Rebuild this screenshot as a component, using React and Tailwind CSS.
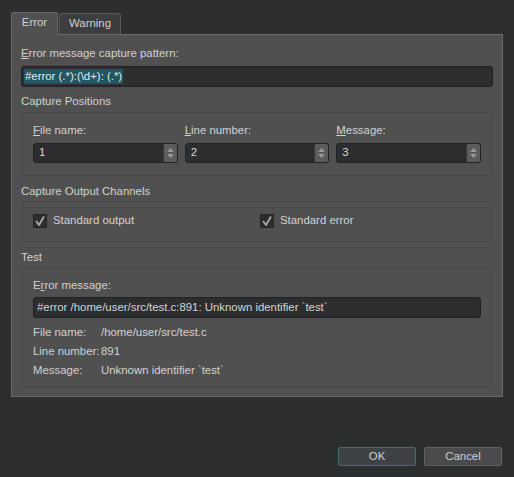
import React from "react";

const font = { fontFamily: '"Liberation Sans", Arial, sans-serif' };

function Spin({ value }) {
  return (
    <div className="flex-1 h-[20px] flex rounded-[3px] border border-[#1f2022] bg-[#2c2d2f] overflow-hidden">
      <div className="flex-1 flex items-center pl-[5px] text-[#d6d6d6]">{value}</div>
      <div className="w-[14px] bg-[#5c5c5c] border-l border-[#3a3a3a] flex flex-col items-center justify-center gap-[2px]">
        <svg width="7" height="4" viewBox="0 0 7 4"><path d="M0 4 L3.5 0 L7 4 Z" fill="#9a9a9a" /></svg>
        <svg width="7" height="4" viewBox="0 0 7 4"><path d="M0 0 L3.5 4 L7 0 Z" fill="#9a9a9a" /></svg>
      </div>
    </div>
  );
}

function Check({ label }) {
  return (
    <div className="flex items-center gap-[6px]">
      <div className="w-[14px] h-[14px] bg-[#2c2d2f] border border-[#242527] flex items-center justify-center">
        <svg width="10" height="10" viewBox="0 0 10 10">
          <path d="M1 5 L4 9 L9 0.5" stroke="#a8a8a8" strokeWidth="1.8" fill="none" />
        </svg>
      </div>
      <span className="whitespace-nowrap">{label}</span>
    </div>
  );
}

export default function App() {
  return (
    <div
      className="w-[514px] h-[477px] bg-[#2d2e30] text-[11.4px] text-[#d2d2d2] flex flex-col px-[11px] pt-[11px] leading-none whitespace-nowrap"
      style={font}
    >
      <div className="flex items-end h-[23px]">
        <div className="w-[47px] h-[23px] bg-[#505050] border border-b-0 border-[#6a6a6a] rounded-t-[3px] flex items-center justify-center relative z-10 -mb-px pb-[2px]">
          Error
        </div>
        <div className="ml-[1px] w-[62px] h-[21px] bg-[#3c3d3f] border border-b-0 border-[#5a5a5a] rounded-t-[3px] flex items-center justify-center">
          Warning
        </div>
      </div>
      <div className="w-[492px] h-[363px] bg-[#505050] border border-[#6a6a6a] flex flex-col px-[9px] pt-[12px]">
        <div className="h-[14px] flex items-center"><span className="underline">E</span>rror message capture pattern:</div>
        <div className="mt-[5px] h-[21px] rounded-[3px] border border-[#1f2022] bg-[#2c2d2f] flex items-center pl-[2px]">
          <span className="bg-[#1f5762] text-[#e8e8e8] px-[1px] py-[2px]">#error (.*):(\d+): (.*)</span>
        </div>
        <div className="mt-[8px] h-[14px] flex items-center">Capture Positions</div>
        <div className="mt-[3px] mx-[1px] h-[64px] border border-[#484848] rounded-[2px] flex gap-[7px] px-[10px] pt-[11px]">
          {[["F", "ile name:", "1"], ["L", "ine number:", "2"], ["M", "essage:", "3"]].map(([u, rest, v]) => (
            <div key={u} className="flex-1 flex flex-col">
              <div className="h-[14px] flex items-center"><span className="underline">{u}</span>{rest}</div>
              <div className="mt-[5px] flex"><Spin value={v} /></div>
            </div>
          ))}
        </div>
        <div className="mt-[9px] h-[14px] flex items-center">Capture Output Channels</div>
        <div className="mt-[2px] mx-[1px] h-[41px] border border-[#484848] rounded-[2px] flex items-center px-[10px] pb-[2px]">
          <div className="w-[227px]"><Check label="Standard output" /></div>
          <Check label="Standard error" />
        </div>
        <div className="mt-[9px] h-[14px] flex items-center">Test</div>
        <div className="mt-[2px] mx-[1px] h-[120px] border border-[#484848] rounded-[2px] flex flex-col px-[10px] pt-[11px]">
          <div className="h-[14px] flex items-center">E<span className="underline">r</span>ror message:</div>
          <div className="mt-[4px] h-[21px] rounded-[3px] border border-[#1f2022] bg-[#2c2d2f] flex items-center pl-[3px] text-[#d6d6d6]">
            #error /home/user/src/test.c:891: Unknown identifier `test`
          </div>
          <div className="mt-[8px] flex flex-col gap-[5px]">
            {[["File name:", "/home/user/src/test.c"], ["Line number:", "891"], ["Message:", "Unknown identifier `test`"]].map(([k, v]) => (
              <div key={k} className="flex h-[14px] items-center">
                <div className="w-[68px]">{k}</div>
                <div>{v}</div>
              </div>
            ))}
          </div>
        </div>
      </div>
      <div className="flex justify-end gap-[8px] mt-[50px]">
        <button className="w-[78px] h-[19px] bg-[#3e4244] border border-[#4a6a72] rounded-[2px] text-[#d2d2d2] text-[11.4px]" style={font}>OK</button>
        <button className="w-[78px] h-[19px] bg-[#494a4c] border border-[#626262] rounded-[2px] text-[#d2d2d2] mr-[1px] text-[11.4px]" style={font}>Cancel</button>
      </div>
    </div>
  );
}
